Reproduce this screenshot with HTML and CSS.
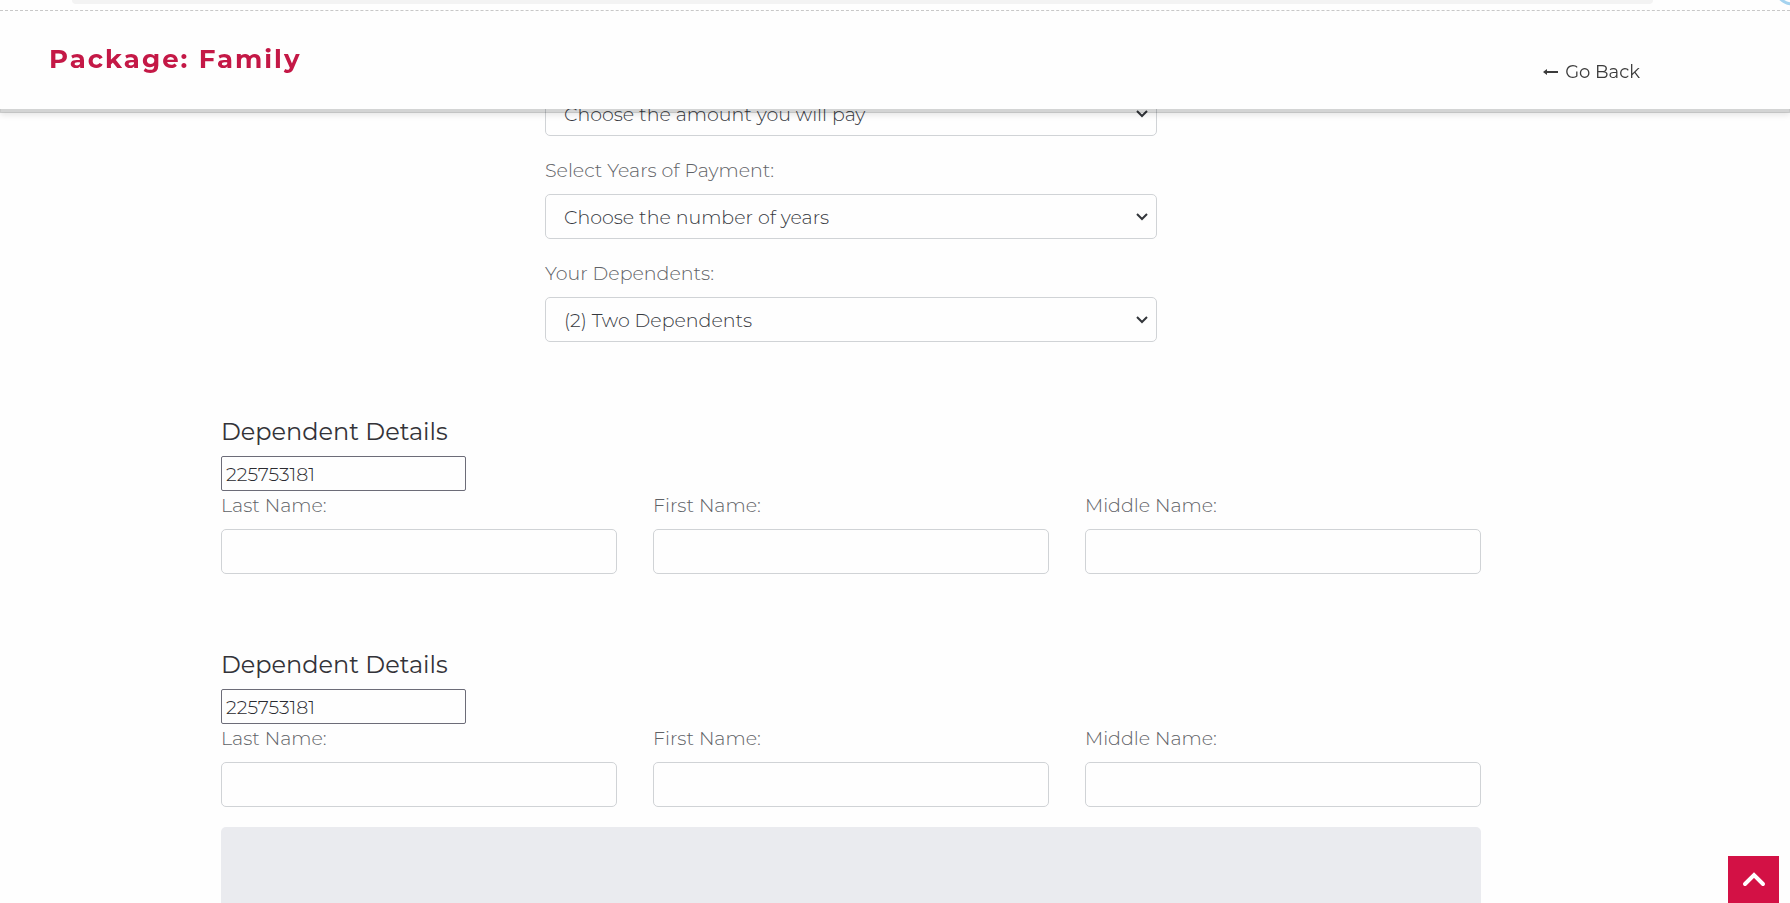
FILE: index.html
```
<!DOCTYPE html>
<html lang="en">

<head>
    <meta charset="utf-8">
    <title>Package: Family</title>
    <meta name="viewport" content="width=device-width, initial-scale=1">
    <link rel="stylesheet" href="styles.css">
</head>
<body>
    <header class="header">
        <div class="top-strip">
            <div class="strip-pill"></div>
            <svg class="strip-ring" width="13" height="6" viewBox="0 0 13 6">
                <circle cx="16" cy="-14" r="18" fill="none" stroke="#a5d3ef" stroke-width="3"/>
            </svg>
        </div>
        <div class="title-bar">
            <h1>Package: Family</h1>
            <a class="go-back" href="#">
                <svg width="15" height="6" viewBox="0 0 15 6">
                    <path d="M0 3L4 0V2H15V4H4V6Z" fill="#3c3c3c"/>
                </svg>
                Go Back
            </a>
        </div>
    </header>

    <main>
        <form class="container">
            <div class="payment">
                <div class="form-group">
                    <select class="form-control" id="amount" aria-label="Amount">
                        <option>Choose the amount you will pay</option>
                    </select>
                </div>
                <div class="form-group">
                    <label for="years">Select Years of Payment:</label>
                    <select class="form-control" id="years">
                        <option>Choose the number of years</option>
                    </select>
                </div>
                <div class="form-group">
                    <label for="dependents">Your Dependents:</label>
                    <select class="form-control" id="dependents">
                        <option>(2) Two Dependents</option>
                    </select>
                </div>
            </div>

            <section class="dependent">
                <h2>Dependent Details</h2>
                <input class="dependent-id" type="text" value="225753181" aria-label="Dependent ID">
                <div class="row">
                    <div class="form-group">
                        <label for="last1">Last Name:</label>
                        <input class="form-control" id="last1" type="text">
                    </div>
                    <div class="form-group">
                        <label for="first1">First Name:</label>
                        <input class="form-control" id="first1" type="text">
                    </div>
                    <div class="form-group">
                        <label for="middle1">Middle Name:</label>
                        <input class="form-control" id="middle1" type="text">
                    </div>
                </div>
            </section>

            <section class="dependent">
                <h2>Dependent Details</h2>
                <input class="dependent-id" type="text" value="225753181" aria-label="Dependent ID">
                <div class="row">
                    <div class="form-group">
                        <label for="last2">Last Name:</label>
                        <input class="form-control" id="last2" type="text">
                    </div>
                    <div class="form-group">
                        <label for="first2">First Name:</label>
                        <input class="form-control" id="first2" type="text">
                    </div>
                    <div class="form-group">
                        <label for="middle2">Middle Name:</label>
                        <input class="form-control" id="middle2" type="text">
                    </div>
                </div>
            </section>

            <div class="summary"></div>
        </form>
    </main>

    <button class="back-to-top" type="button" aria-label="Back to top">
        <svg width="24" height="16" viewBox="0 0 24 16">
            <path d="M3 12L12 3L21 12" fill="none" stroke="#fff" stroke-width="4" stroke-linecap="round"/>
        </svg>
    </button>
</body>

</html>
```
FILE: styles.css
```
* {
    box-sizing: border-box;
}

body {
    display: flex;
    flex-direction: column;
    min-height: 100vh;
    margin: 0;
    font-family: Montserrat, Inter, sans-serif;
    font-size: 19px;
    font-weight: 300;
    color: #333338;
    background-color: #fefefe;
}

.header {
    position: fixed;
    top: 0;
    left: 0;
    right: 0;
    z-index: 10;
    background-color: #fefefe;
    background-clip: padding-box;
    border-bottom: 4px solid rgba(0, 5, 5, 0.17);
    box-shadow: 0 2px 6px rgba(0, 0, 0, 0.1);
}

.top-strip {
    display: flex;
    justify-content: space-between;
    height: 11px;
    padding-left: 72px;
    border-bottom: 1px dashed #c8c8c8;
}

.strip-pill {
    width: 92%;
    height: 4px;
    background-color: #f3f3f3;
    border-radius: 0 0 16px 16px;
}

.title-bar {
    display: flex;
    justify-content: space-between;
    height: 98px;
    padding: 32px 150px 0 49px;
}

h1 {
    margin: 0;
    font-size: 26px;
    font-weight: 700;
    line-height: 32px;
    letter-spacing: 2px;
    color: #c41846;
}

.go-back {
    display: flex;
    align-items: center;
    gap: 7px;
    height: 58px;
    font-size: 18px;
    font-weight: 400;
    color: #3c3c3c;
    text-decoration: none;
}

main {
    display: flex;
    flex: 1;
    justify-content: center;
    padding: 91px 88px 0 0;
}

.container {
    display: flex;
    flex-direction: column;
    width: 1260px;
}

.payment {
    width: 612px;
    margin: 0 auto 54px;
}

.form-group {
    flex: 1;
    margin-bottom: 20px;
}

label {
    display: block;
    margin-bottom: 8px;
    line-height: 30px;
    color: #5f6266;
}

.form-control {
    display: block;
    width: 100%;
    height: 45px;
    padding: 2px 18px 0;
    font: inherit;
    color: #36393e;
    background-color: #fefefe;
    border: 1px solid #d0d3d6;
    border-radius: 5px;
}

select.form-control {
    appearance: none;
    background-image: url("data:image/svg+xml,%3Csvg xmlns='http://www.w3.org/2000/svg' width='12' height='8' viewBox='0 0 12 8'%3E%3Cpath d='M1 1L6 6L11 1' fill='none' stroke='%2333363b' stroke-width='2'/%3E%3C/svg%3E");
    background-repeat: no-repeat;
    background-position: right 8px center;
}

.dependent {
    margin-bottom: 55px;
}

.dependent:last-of-type {
    margin-bottom: 0;
}

h2 {
    margin: 0 0 8px;
    font-size: 24px;
    font-weight: 400;
    line-height: 32px;
}

.dependent-id {
    display: block;
    width: 245px;
    height: 35px;
    padding: 2px 4px 0;
    font: inherit;
    color: #2b2b30;
    background-color: #fefefe;
    border: 1px solid #6c6c78;
    border-radius: 2px;
}

.row {
    display: flex;
    gap: 36px;
}

.summary {
    flex: 1;
    min-height: 76px;
    background-color: #eaebef;
    border-radius: 5px 5px 0 0;
}

.back-to-top {
    position: fixed;
    right: 11px;
    bottom: 0;
    z-index: 10;
    display: flex;
    align-items: center;
    justify-content: center;
    width: 51px;
    height: 47px;
    padding: 0;
    background-color: #d31145;
    border: 0;
}
```
